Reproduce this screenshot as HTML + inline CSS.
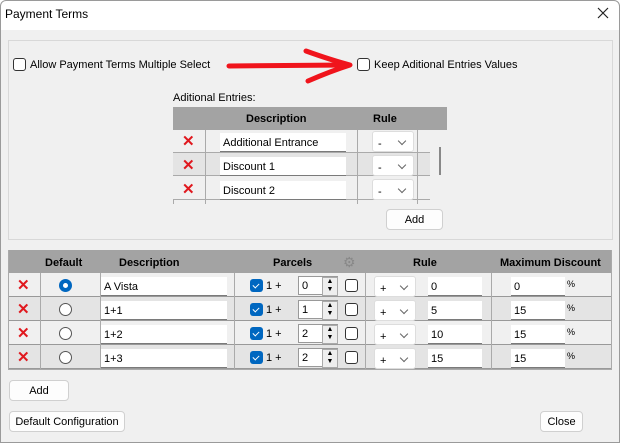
<!DOCTYPE html><html><head><style>
*{box-sizing:border-box;margin:0;padding:0}
body{width:620px;height:443px;background:#f0f0f0;font-family:"Liberation Sans",sans-serif;font-size:11px;color:#000;position:relative;overflow:hidden}
.a{position:absolute}
.tb{left:0;top:0;width:620px;height:30px;background:#fff}
.win{left:0;top:0;width:620px;height:443px;border:1px solid #9a9a9a;border-radius:6px 6px 0 0;pointer-events:none}
.cb{width:13px;height:13px;border:1px solid #333;border-radius:3px;background:#fff}
.cbb{width:13px;height:13px;border-radius:3px;background:#0067c0}
.cbb::after{content:"";position:absolute;left:4px;top:3px;width:3px;height:5px;border-right:1px solid #fff;border-bottom:1px solid #fff;transform:rotate(45deg)}
.in{background:#fff;border-bottom:1px solid #7a7a7a;height:19px;padding:4px 3px 0;white-space:nowrap;line-height:13px}
.cmb{background:#fff;border:1px solid #ddd;border-radius:3px;height:21px;padding:6px 5px 0;line-height:13px}
.cmb::after{content:"";position:absolute;right:8px;top:6px;width:5px;height:5px;border-right:1px solid #666;border-bottom:1px solid #666;transform:rotate(45deg)}
.btn{background:#fdfdfd;border:1px solid #d0d0d0;border-radius:4px;display:flex;align-items:center;justify-content:center}
.hd{background:#a3a3a3}
.h{font-weight:bold;font-size:11px}
.x{color:#e0181e;font-weight:bold;font-size:15px;line-height:1}
.rd{width:13px;height:13px;border:1px solid #555;border-radius:50%;background:#fff}
.sp{width:16px;height:19px;border:1px solid #aaa;background:#eee;font-size:7px;line-height:8px;text-align:center}
</style></head><body>
<div class="a tb"></div>
<div class="a" style="left:5px;top:7px;font-size:12px">Payment Terms</div>
<svg class="a" style="left:597px;top:7px" width="12" height="12"><path d="M1 1L11 11M11 1L1 11" stroke="#222" stroke-width="1.2"/></svg>

<div class="a" style="left:8px;top:40px;width:605px;height:200px;border:1px solid #d8d8d8"></div>
<div class="a cb" style="left:13px;top:58px"></div>
<div class="a" style="left:30px;top:59px">Allow Payment Terms Multiple Select</div>
<svg class="a" style="left:226px;top:48px" width="130" height="36"><path d="M3 18 L120 17" stroke="#f0141c" stroke-width="5" stroke-linecap="round"/><path d="M80 3 Q105 12 124 17 Q105 23 82 33" stroke="#f0141c" stroke-width="5" fill="none" stroke-linecap="round" stroke-linejoin="round"/></svg>
<div class="a cb" style="left:357px;top:58px"></div>
<div class="a" style="left:374px;top:59px">Keep Aditional Entries Values</div>

<div class="a" style="left:173px;top:92px">Aditional Entries:</div>
<div class="a hd" style="left:173px;top:107px;width:274px;height:23px"></div>
<div class="a h" style="left:246px;top:113px">Description</div>
<div class="a h" style="left:373px;top:113px">Rule</div>
<div class="a" style="left:173px;top:130px;width:274px;height:23px;background:#f0f0f0;border-bottom:1px solid #aaa"></div>
<div class="a" style="left:173px;top:153px;width:274px;height:23px;background:#e4e4e4;border-bottom:1px solid #aaa"></div>
<div class="a" style="left:173px;top:176px;width:274px;height:24px;background:#f0f0f0;border-bottom:1px solid #aaa"></div>
<div class="a" style="left:173px;top:200px;width:1px;height:4px;background:#aaa"></div>
<div class="a" style="left:205px;top:130px;width:1px;height:74px;background:#aaa"></div>
<div class="a" style="left:357px;top:130px;width:1px;height:74px;background:#aaa"></div>
<div class="a" style="left:417px;top:130px;width:1px;height:74px;background:#aaa"></div>
<div class="a" style="left:430px;top:130px;width:17px;height:74px;background:#f0f0f0"></div>
<div class="a" style="left:439px;top:147px;width:2px;height:28px;background:#888"></div>
<div class="a x" style="left:182px;top:134px">✕</div>
<div class="a x" style="left:182px;top:158px">✕</div>
<div class="a x" style="left:182px;top:182px">✕</div>
<div class="a in" style="left:220px;top:133px;width:126px">Additional Entrance</div>
<div class="a in" style="left:220px;top:157px;width:126px">Discount 1</div>
<div class="a in" style="left:220px;top:181px;width:126px">Discount 2</div>
<div class="a cmb" style="left:372px;top:131px;width:42px">-</div>
<div class="a cmb" style="left:372px;top:155px;width:42px">-</div>
<div class="a cmb" style="left:372px;top:179px;width:42px">-</div>
<div class="a btn" style="left:386px;top:209px;width:57px;height:21px">Add</div>

<div class="a hd" style="left:8px;top:250px;width:604px;height:23px"></div>
<div class="a" style="left:8px;top:250px;width:604px;height:120px;border:1px solid #aaa;border-top:none;pointer-events:none"></div>
<div class="a h" style="left:45px;top:257px">Default</div>
<div class="a h" style="left:119px;top:257px">Description</div>
<div class="a h" style="left:273px;top:257px">Parcels</div>
<div class="a" style="left:343px;top:254px;font-size:14px;color:#888">⚙</div>
<div class="a h" style="left:413px;top:257px">Rule</div>
<div class="a h" style="left:500px;top:257px">Maximum Discount</div>

<div class="a" style="left:9px;top:273px;width:602px;height:24px;background:#f0f0f0;border-bottom:1px solid #999"></div>
<div class="a" style="left:9px;top:297px;width:602px;height:24px;background:#e4e4e4;border-bottom:1px solid #999"></div>
<div class="a" style="left:9px;top:321px;width:602px;height:24px;background:#f0f0f0;border-bottom:1px solid #999"></div>
<div class="a" style="left:9px;top:345px;width:602px;height:24px;background:#e4e4e4;border-bottom:1px solid #999"></div>
<div class="a" style="left:40px;top:273px;width:1px;height:96px;background:#aaa"></div>
<div class="a" style="left:100px;top:273px;width:1px;height:96px;background:#aaa"></div>
<div class="a" style="left:234px;top:273px;width:1px;height:96px;background:#aaa"></div>
<div class="a" style="left:365px;top:273px;width:1px;height:96px;background:#aaa"></div>
<div class="a" style="left:491px;top:273px;width:1px;height:96px;background:#aaa"></div>

<div class="a x" style="left:17px;top:278px">✕</div>
<div class="a x" style="left:17px;top:302px">✕</div>
<div class="a x" style="left:17px;top:326px">✕</div>
<div class="a x" style="left:17px;top:350px">✕</div>
<div class="a rd" style="left:59px;top:279px;border:4px solid #0067c0"></div>
<div class="a rd" style="left:59px;top:303px"></div>
<div class="a rd" style="left:59px;top:327px"></div>
<div class="a rd" style="left:59px;top:351px"></div>
<div class="a in" style="left:101px;top:277px;width:126px">A Vista</div>
<div class="a in" style="left:101px;top:301px;width:126px">1+1</div>
<div class="a in" style="left:101px;top:325px;width:126px">1+2</div>
<div class="a in" style="left:101px;top:349px;width:126px">1+3</div>

<div class="a cbb" style="left:250px;top:279px"></div><div class="a" style="left:266px;top:280px">1 +</div>
<div class="a cbb" style="left:250px;top:303px"></div><div class="a" style="left:266px;top:304px">1 +</div>
<div class="a cbb" style="left:250px;top:327px"></div><div class="a" style="left:266px;top:328px">1 +</div>
<div class="a cbb" style="left:250px;top:351px"></div><div class="a" style="left:266px;top:352px">1 +</div>
<div class="a in" style="left:298px;top:276px;width:40px;border:1px solid #999;padding-top:3px">0</div><div class="a sp" style="left:322px;top:277px">▲<br>▼</div>
<div class="a in" style="left:298px;top:300px;width:40px;border:1px solid #999;padding-top:3px">1</div><div class="a sp" style="left:322px;top:301px">▲<br>▼</div>
<div class="a in" style="left:298px;top:324px;width:40px;border:1px solid #999;padding-top:3px">2</div><div class="a sp" style="left:322px;top:325px">▲<br>▼</div>
<div class="a in" style="left:298px;top:348px;width:40px;border:1px solid #999;padding-top:3px">2</div><div class="a sp" style="left:322px;top:349px">▲<br>▼</div>
<div class="a cb" style="left:345px;top:279px"></div>
<div class="a cb" style="left:345px;top:303px"></div>
<div class="a cb" style="left:345px;top:327px"></div>
<div class="a cb" style="left:345px;top:351px"></div>

<div class="a cmb" style="left:374px;top:276px;width:42px">+</div>
<div class="a cmb" style="left:374px;top:300px;width:42px">+</div>
<div class="a cmb" style="left:374px;top:324px;width:42px">+</div>
<div class="a cmb" style="left:374px;top:348px;width:42px">+</div>
<div class="a in" style="left:428px;top:277px;width:54px">0</div>
<div class="a in" style="left:428px;top:301px;width:54px">5</div>
<div class="a in" style="left:428px;top:325px;width:54px">10</div>
<div class="a in" style="left:428px;top:349px;width:54px">15</div>
<div class="a in" style="left:511px;top:277px;width:54px">0</div><div class="a" style="left:567px;top:279px;font-size:9px">%</div>
<div class="a in" style="left:511px;top:301px;width:54px">15</div><div class="a" style="left:567px;top:303px;font-size:9px">%</div>
<div class="a in" style="left:511px;top:325px;width:54px">15</div><div class="a" style="left:567px;top:327px;font-size:9px">%</div>
<div class="a in" style="left:511px;top:349px;width:54px">15</div><div class="a" style="left:567px;top:351px;font-size:9px">%</div>

<div class="a btn" style="left:9px;top:380px;width:60px;height:21px">Add</div>
<div class="a btn" style="left:9px;top:411px;width:116px;height:21px">Default Configuration</div>
<div class="a btn" style="left:540px;top:411px;width:43px;height:21px">Close</div>
<div class="a win"></div>
</body></html>
